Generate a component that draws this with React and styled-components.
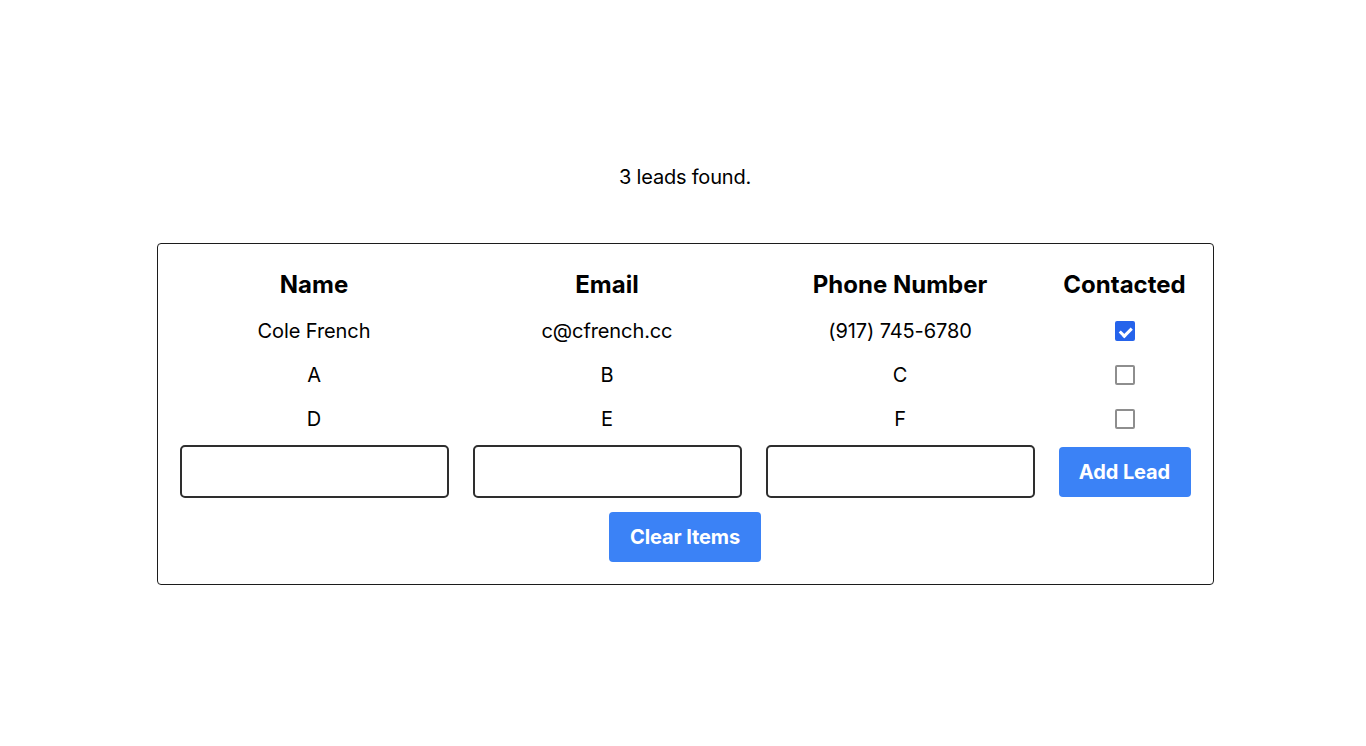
import React, { useState } from "react";
import styled, { createGlobalStyle } from "styled-components";

const GlobalStyle = createGlobalStyle`
  html, body {
    margin: 0;
    padding: 0;
    background: #ffffff;
    font-family: Inter, "Noto Sans", "Liberation Sans", sans-serif;
    color: #000;
  }
`;

const Page = styled.main`
  display: flex;
  flex-direction: column;
  align-items: center;
  padding: 163px 0 0 4px;
`;

const Count = styled.p`
  margin: 0;
  font-size: 20px;
  line-height: 28px;
  letter-spacing: -0.2px;
`;

const Card = styled.section`
  margin-top: 52px;
  border: 1.5px solid #1c1c1c;
  border-radius: 4px;
  padding: 22px;
  display: flex;
  flex-direction: column;
  align-items: center;
`;

const Grid = styled.div`
  display: grid;
  grid-template-columns: 269px 269px 269px 132px;
  column-gap: 24px;
  justify-items: center;
  align-items: center;
`;

const Head = styled.div`
  font-size: 24px;
  font-weight: 700;
  line-height: 38px;
  padding-bottom: 5px;
`;

const Cell = styled.div`
  font-size: 20px;
  line-height: 44px;
  height: 44px;
  display: flex;
  align-items: center;
  letter-spacing: -0.1px;
`;

const Box = styled.input.attrs({ type: "checkbox" })`
  appearance: none;
  margin: 0;
  width: 20px;
  height: 20px;
  box-sizing: border-box;
  border-radius: 2px;
  border: 2px solid ${(p) => (p.checked ? "#2563eb" : "#8e8e8e")};
  background: ${(p) => (p.checked ? "#2563eb" : "#fff")};
  position: relative;
  cursor: pointer;

  &:checked::after {
    content: "";
    position: absolute;
    left: 5px;
    top: 1.5px;
    width: 4.5px;
    height: 8.5px;
    border: solid #fff;
    border-width: 0 3px 3px 0;
    transform: rotate(45deg);
  }
`;

const Field = styled.input`
  margin-top: 4px;
  width: 269px;
  height: 53px;
  box-sizing: border-box;
  border: 2px solid #2e2e2e;
  border-radius: 5px;
  font: inherit;
  font-size: 20px;
  padding: 0 12px;
  outline: none;
`;

const Button = styled.button`
  border: none;
  border-radius: 4px;
  background: #3b82f6;
  color: #fff;
  font-family: inherit;
  font-size: 20px;
  font-weight: 700;
  height: 50px;
  padding: ${(p) => (p.$full ? "0" : "0 21px")};
  white-space: nowrap;
  letter-spacing: -0.1px;
  width: ${(p) => (p.$full ? "132px" : "auto")};
  margin-top: ${(p) => p.$top || "0"};
  cursor: pointer;
`;

const initial = [
  { name: "Cole French", email: "c@cfrench.cc", phone: "(917) 745-6780", contacted: true },
  { name: "A", email: "B", phone: "C", contacted: false },
  { name: "D", email: "E", phone: "F", contacted: false },
];

export default function App() {
  const [leads, setLeads] = useState(initial);

  const toggle = (i) =>
    setLeads(leads.map((l, j) => (j === i ? { ...l, contacted: !l.contacted } : l)));

  return (
    <Page>
      <GlobalStyle />
      <Count>{leads.length} leads found.</Count>
      <Card>
        <Grid>
          <Head>Name</Head>
          <Head>Email</Head>
          <Head>Phone Number</Head>
          <Head>Contacted</Head>
          {leads.map((l, i) => (
            <React.Fragment key={i}>
              <Cell>{l.name}</Cell>
              <Cell>{l.email}</Cell>
              <Cell>{l.phone}</Cell>
              <Cell>
                <Box checked={l.contacted} onChange={() => toggle(i)} />
              </Cell>
            </React.Fragment>
          ))}
          <Field />
          <Field />
          <Field />
          <Button $full $top="4px">Add Lead</Button>
        </Grid>
        <Button $top="14px" onClick={() => setLeads([])}>Clear Items</Button>
      </Card>
    </Page>
  );
}
